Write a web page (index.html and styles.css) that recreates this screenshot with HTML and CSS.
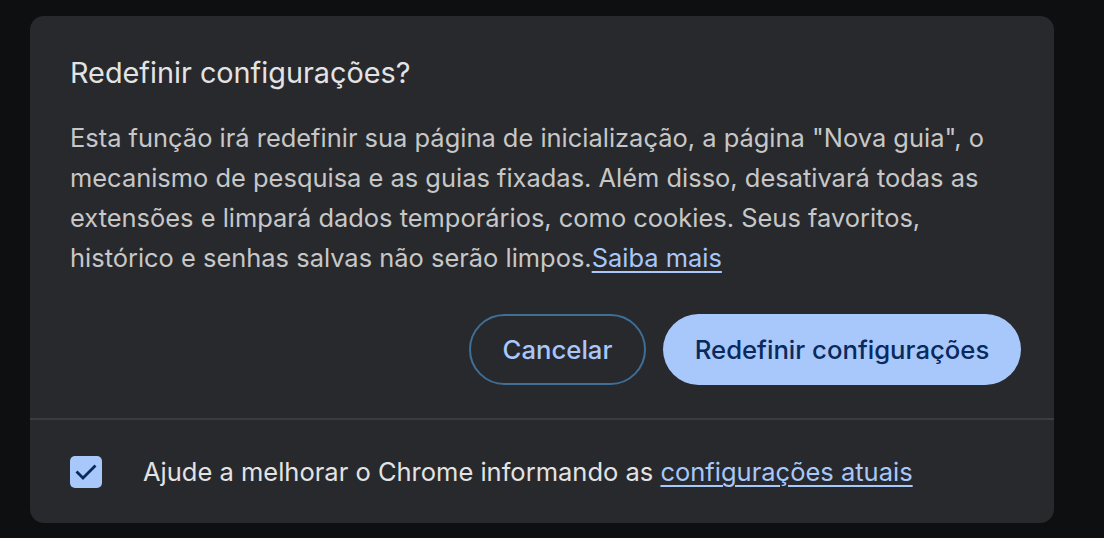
FILE: index.html
```html
<!DOCTYPE html>
<html lang="pt-BR">
<head>
<meta charset="utf-8">
<link rel="stylesheet" href="styles.css">
</head>
<body>
<div class="dialog">
  <div class="main">
    <h1 class="title">Redefinir configurações?</h1>
    <p class="body">Esta função irá redefinir sua página de inicialização, a página "Nova guia", o mecanismo de pesquisa e as guias fixadas. Além disso, desativará todas as extensões e limpará dados temporários, como cookies. Seus favoritos, histórico e senhas salvas não serão limpos.<a class="link" href="#">Saiba mais</a></p>
    <div class="actions">
      <button class="btn btn-outline">Cancelar</button>
      <button class="btn btn-primary">Redefinir configurações</button>
    </div>
  </div>
  <div class="footer">
    <span class="checkbox">
      <svg width="32" height="32" viewBox="0 0 32 32"><path d="M7.5 16.5l5.5 5.5L24.5 10.5" fill="none" stroke="#0a2a5e" stroke-width="2.8" stroke-linecap="square"/></svg>
    </span>
    <span class="footer-text">Ajude a melhorar o Chrome informando as <a class="link" href="#">configurações atuais</a></span>
  </div>
</div>
</body>
</html>
```
FILE: styles.css
```css
html, body {
  margin: 0;
  padding: 0;
  background: #0e0f11;
  height: 100%;
}
body {
  font-family: Inter, "Noto Sans", sans-serif;
  padding: 16px 50px 0 30px;
  box-sizing: border-box;
}
.dialog {
  width: 1024px;
  height: 507px;
  background: #28292d;
  border-radius: 14px;
  display: flex;
  flex-direction: column;
}
.main {
  padding: 0 33px 0 40px;
  border-bottom: 2px solid #3b3c40;
  height: 404px;
  box-sizing: border-box;
}
.title {
  margin: 0;
  padding-top: 39px;
  font-size: 28.8px;
  font-weight: 400;
  line-height: 36px;
  color: #e3e3e3;
}
.body {
  margin: 27px 0 0;
  width: 950px;
  font-size: 25.45px;
  line-height: 40px;
  color: #c7c7c7;
}
.link {
  color: #a8c7fa;
  text-decoration: underline;
  text-decoration-thickness: 1.5px;
  text-underline-offset: 4px;
}
.actions {
  display: flex;
  justify-content: flex-end;
  gap: 17px;
  margin-top: 36px;
}
.btn {
  font-family: Inter, "Noto Sans", sans-serif;
  font-size: 25.7px;
  font-weight: 500;
  height: 71px;
  border-radius: 36px;
  padding: 0;
  cursor: pointer;
}
.btn-outline {
  background: transparent;
  color: #a8c7fa;
  border: 2px solid #3f6e96;
  width: 177px;
}
.btn-primary {
  background: #a8c7fa;
  color: #0a2a5e;
  border: none;
  width: 358px;
}
.footer {
  flex: 1;
  display: flex;
  align-items: center;
  padding: 0 40px;
  gap: 41px;
}
.checkbox {
  width: 32px;
  height: 32px;
  border-radius: 5px;
  background: #a8c7fa;
  display: flex;
  align-items: center;
  justify-content: center;
  flex-shrink: 0;
}
.footer-text {
  font-size: 25.5px;
  color: #e3e3e3;
}
```
